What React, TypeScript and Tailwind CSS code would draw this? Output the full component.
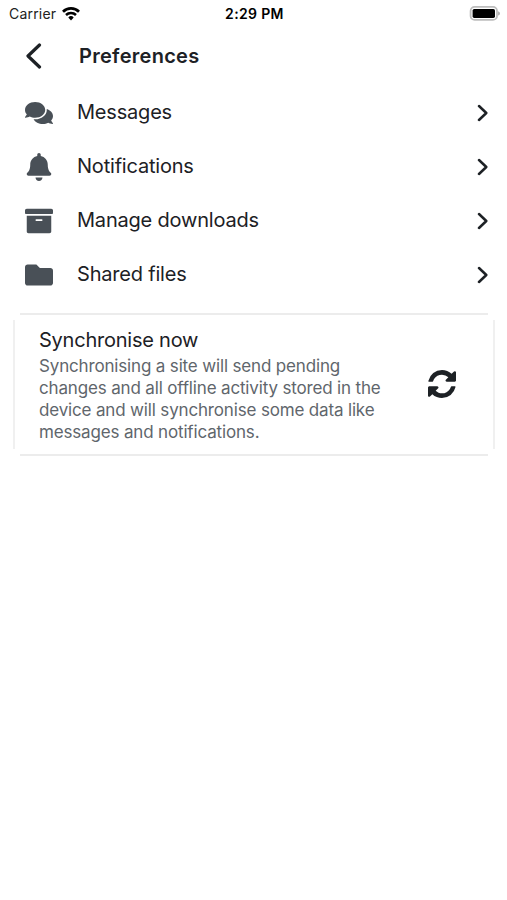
import React from "react"
import { FaArchive, FaBell, FaComments, FaFolder } from "react-icons/fa"

interface PreferenceItem {
  label: string
  icon: React.ReactNode
}

const items: PreferenceItem[] = [
  { label: "Messages", icon: <FaComments className="h-7 w-7" /> },
  { label: "Notifications", icon: <FaBell className="h-7 w-7" /> },
  { label: "Manage downloads", icon: <FaArchive className="h-7 w-7" /> },
  { label: "Shared files", icon: <FaFolder className="h-7 w-7" /> },
]

function WifiIcon() {
  return (
    <svg viewBox="0 0 18 14" className="h-[14px] w-[18px]" fill="none" stroke="#000">
      <path d="M1 4.7a11.3 11.3 0 0 1 16 0" strokeWidth="2.7" />
      <path d="M4 8a7.1 7.1 0 0 1 10 0" strokeWidth="2.5" />
      <path d="M6.3 10.4a3.8 3.8 0 0 1 5.4 0L9 13.4z" fill="#000" stroke="none" />
    </svg>
  )
}

function BatteryIcon() {
  return (
    <svg viewBox="0 0 31 15" className="h-[15px] w-[31px]">
      <rect x="1.6" y="0.9" width="26.4" height="13" rx="4" fill="#fff" stroke="#bdbdbd" strokeWidth="1.8" />
      <rect x="3.6" y="2.9" width="22.4" height="9" rx="1.6" fill="#000" />
      <path d="M29 5.2c1.3.5 2 1.2 2 2.2s-.7 1.7-2 2.2z" fill="#b4b4b4" />
    </svg>
  )
}

function RefreshIcon() {
  return (
    <svg viewBox="0 0 1536 1536" className="mb-0.5 h-7 w-7" fill="currentColor">
      <path d="M1511 928q0 5-1 7-64 268-268 434.500T764 1536q-146 0-282.500-55T238 1324l-129 129q-19 19-45 19t-45-19-19-45V960q0-26 19-45t45-19h448q26 0 45 19t19 45-19 45l-137 137q71 66 161 102t187 36q134 0 250-65t186-179q11-17 53-117 8-23 30-23h192q13 0 22.500 9.500t9.500 22.500zm25-800v448q0 26-19 45t-45 19h-448q-26 0-45-19t-19-45 19-45l138-138Q969 256 768 256q-134 0-250 65T332 500q-11 17-53 117-8 23-30 23H50q-13 0-22.500-9.500T18 608v-7q65-268 270-434.500T768 0q146 0 284 55.500T1297 212l130-129q19-19 45-19t45 19 19 45z" />
    </svg>
  )
}

function StatusBar() {
  return (
    <div className="grid h-7 grid-cols-3 items-center pl-[9px] pr-[7px] pb-px text-black">
      <div className="flex items-center gap-1.5">
        <span className="text-[14px] leading-none tracking-[0.2px] text-[#222]">Carrier</span>
        <WifiIcon />
      </div>
      <span className="text-center text-[14px] font-semibold leading-none tracking-[0.35px]">2:29 PM</span>
      <div className="flex justify-end">
        <BatteryIcon />
      </div>
    </div>
  )
}

function Header() {
  return (
    <header className="flex h-14 items-center pl-[26px]">
      <svg viewBox="0 0 16 28" className="h-7 w-4" fill="none" stroke="#1d2125" strokeWidth="3.2" strokeLinecap="round" strokeLinejoin="round">
        <path d="M13.5 3 2 14l11.5 11" />
      </svg>
      <h1 className="ml-[37px] text-[20px] font-semibold leading-none tracking-[0.28px]">Preferences</h1>
    </header>
  )
}

function PreferenceRow({ label, icon }: PreferenceItem) {
  return (
    <li className="flex h-[53.8px] items-center pl-[25px] pr-[19px]">
      <span className="w-7 text-[#495057]">{icon}</span>
      <span className="ml-6 flex-1 pb-0.5 text-[20px] leading-none tracking-[-0.2px]">{label}</span>
      <svg viewBox="0 0 11 18" className="h-[18px] w-[11px]" fill="none" stroke="#1d2125" strokeWidth="2.5" strokeLinecap="round" strokeLinejoin="round">
        <path d="M2 2l7.300 7L2 16" />
      </svg>
    </li>
  )
}

function SyncCard() {
  return (
    <section className="ml-[13px] mr-3 mt-[11.3px]">
      <div className="mx-[7px] h-[2px] bg-[#ececec]" />
      <div className="my-[5px] flex h-[129px] items-center border-x-2 border-[#f0f0f0] pl-6 pr-[37px]">
        <div className="flex-1">
          <h2 className="text-[20px] leading-[26px] tracking-[-0.23px]">Synchronise now</h2>
          <p className="mt-0.5 whitespace-nowrap text-[17px] leading-[22px] tracking-[-0.16px] text-[#5f666c]">
            Synchronising a site will send pending
            <br />
            changes and all offline activity stored in the
            <br />
            device and will synchronise some data like
            <br />
            messages and notifications.
          </p>
        </div>
        <RefreshIcon />
      </div>
      <div className="mx-[7px] h-[2px] bg-[#ececec]" />
    </section>
  )
}

export default function App() {
  return (
    <main className="h-[900px] w-full overflow-hidden bg-white font-['Inter','Liberation_Sans',sans-serif] text-[#1d2125]">
      <StatusBar />
      <Header />
      <ul className="mt-[2.6px]">
        {items.map((item) => (
          <PreferenceRow key={item.label} {...item} />
        ))}
      </ul>
      <SyncCard />
    </main>
  )
}
